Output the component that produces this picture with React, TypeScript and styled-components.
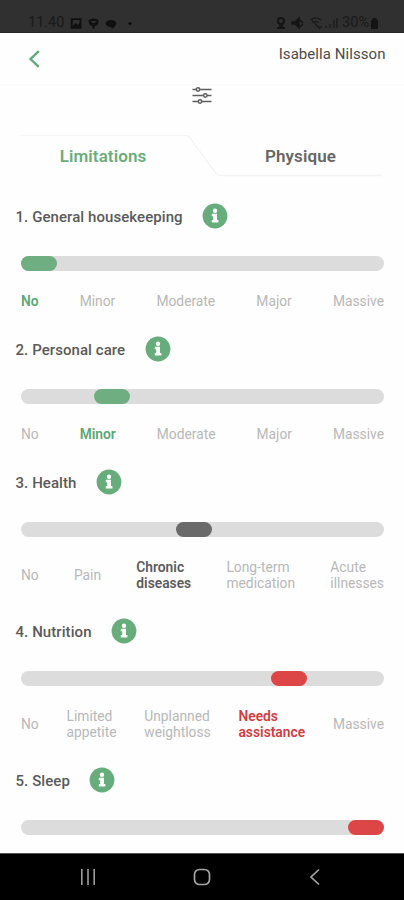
import React from "react";
import styled, { createGlobalStyle } from "styled-components";

const GlobalStyle = createGlobalStyle`
  * { box-sizing: border-box; }
  body {
    margin: 0;
    background: #fefefe;
    font-family: Roboto, "Liberation Sans", sans-serif;
  }
`;

type Tone = "green" | "grey" | "red";

const fills: Record<Tone, string> = { green: "#6fae80", grey: "#6a6a6a", red: "#dc4646" };
const inks: Record<Tone, string> = { green: "#5ba873", grey: "#5c5c5c", red: "#cf3d42" };

const Screen = styled.div`
  display: flex;
  flex-direction: column;
  width: 404px;
  height: 900px;
  overflow: hidden;
  background: #fefefe;
`;

const StatusBar = styled.div`
  display: flex;
  justify-content: space-between;
  flex: none;
  height: 33px;
  padding: 14px 24px 0 28px;
  background: #303030;
  border-bottom: 1px solid #262626;
  color: #191919;
`;

const StatusGroup = styled.div`
  display: flex;
  align-items: center;
  height: 18px;
`;

const StatusText = styled.span`
  font-size: 14.5px;
  line-height: 18px;
`;

const Header = styled.header`
  display: flex;
  justify-content: space-between;
  flex: none;
  height: 52px;
  padding: 0 18.5px 0 28px;
  border-bottom: 1px solid #fafafa;
`;

const BackButton = styled.button`
  display: flex;
  margin: 17px 0 0;
  padding: 0;
  border: 0;
  background: none;
  height: 18px;
`;

const UserName = styled.div`
  padding-top: 11px;
  font-size: 15px;
  line-height: 20px;
  letter-spacing: 0.06px;
  color: #4c4c4c;
`;

const FilterRow = styled.div`
  display: flex;
  justify-content: center;
  flex: none;
  height: 50px;
`;

const TabBar = styled.nav`
  position: relative;
  display: grid;
  grid-template-columns: 165px 162px;
  column-gap: 34px;
  padding-left: 20.5px;
  flex: none;
  height: 43px;
  margin-bottom: 25px;
`;

const TabOutline = styled.svg`
  position: absolute;
  left: 0;
  top: 0;
`;

const Tab = styled.div<{ $active?: boolean }>`
  font-size: 17px;
  font-weight: 600;
  line-height: 43px;
  letter-spacing: 0.1px;
  text-align: center;
  color: ${(p) => (p.$active ? "#69ad7b" : "#666666")};
`;

const Content = styled.main`
  flex: 1;
  min-height: 0;
  overflow: hidden;
  padding-right: 20px;
`;

const Question = styled.section`
  display: flex;
  flex-direction: column;
  padding-bottom: 27.5px;
`;

const Heading = styled.div`
  display: flex;
  align-items: center;
  gap: 19.5px;
  height: 26px;
  padding-left: 15.5px;
`;

const Title = styled.h2`
  margin: 0;
  padding-top: 2px;
  font-size: 15px;
  font-weight: 500;
  line-height: 20px;
  letter-spacing: 0.07px;
  color: #5a5a5a;
`;

const Track = styled.div`
  height: 15px;
  margin: 26.5px 0 22px 21px;
  border-radius: 8px;
  background: #dcdcdc;
`;

const Thumb = styled.div<{ $tone: Tone; $at: number }>`
  width: 36px;
  height: 15px;
  margin-left: ${(p) => p.$at}px;
  border-radius: 8px;
  background: ${(p) => fills[p.$tone]};
`;

const Options = styled.div`
  display: flex;
  align-items: center;
  justify-content: space-between;
  padding-left: 21px;
`;

const Option = styled.span<{ $tone?: Tone }>`
  font-size: 13.8px;
  line-height: 16px;
  letter-spacing: 0;
  white-space: pre-line;
  font-weight: ${(p) => (p.$tone ? 600 : 400)};
  color: ${(p) => (p.$tone ? inks[p.$tone] : "#b8b8b8")};
`;

const NavBar = styled.footer`
  display: flex;
  align-items: center;
  justify-content: space-between;
  flex: none;
  height: 47px;
  padding: 0 82px 0 80px;
  background: #000;
  border-top: 1px solid #555;
`;

const InfoIcon = () => (
  <svg width="26" height="26" viewBox="0 0 26 26">
    <circle cx="13" cy="13" r="12.4" fill="#67ad7b" />
    <circle cx="13" cy="7.700" r="2.200" fill="#fff" />
    <path d="M9.800 10.800h5.200v6.200h1.400v2.500H9.800V17h1.400v-3.700H9.800z" fill="#fff" />
  </svg>
);

interface QuestionData {
  title: string;
  at: number;
  tone: Tone;
  selected: number;
  options: string[];
}

const questions: QuestionData[] = [
  { title: "1. General housekeeping", at: 0, tone: "green", selected: 0, options: ["No", "Minor", "Moderate", "Major", "Massive"] },
  { title: "2. Personal care", at: 72.5, tone: "green", selected: 1, options: ["No", "Minor", "Moderate", "Major", "Massive"] },
  { title: "3. Health", at: 155, tone: "grey", selected: 2, options: ["No", "Pain", "Chronic\ndiseases", "Long-term\nmedication", "Acute\nillnesses"] },
  { title: "4. Nutrition", at: 250, tone: "red", selected: 3, options: ["No", "Limited\nappetite", "Unplanned\nweightloss", "Needs\nassistance", "Massive"] },
  { title: "5. Sleep", at: 327, tone: "red", selected: 4, options: [] },
];

export default function App() {
  return (
    <>
      <GlobalStyle />
      <Screen>
        <StatusBar>
          <StatusGroup>
            <StatusText>11.40</StatusText>
            <svg width="64" height="18" viewBox="0 0 66 18" fill="#101010">
              <path d="M7 4h11v11H7zM9 6v6l3-3 2 2 2-2V6z" fillRule="evenodd" />
              <path d="M25 6.500Q31 2 36 6.500L34.500 11 31.500 12v3h-2v-3L26.500 11zM28 7l1 2h3l1-2z" fillRule="evenodd" />
              <ellipse cx="48.500" cy="9.500" rx="5.500" ry="3.600" />
              <path d="M47 12h6l-3 3z" />
            </svg>
            <svg width="8" height="18" viewBox="0 0 8 18">
              <circle cx="2" cy="9.500" r="1.600" fill="#0c0c0c" />
            </svg>
          </StatusGroup>
          <StatusGroup>
            <svg width="66" height="18" viewBox="0 0 66 18" fill="none" stroke="#151515" strokeWidth="1.500">
              <circle cx="5" cy="7" r="3" strokeWidth="2.200" />
              <path d="M1 14h8M3 12h4" strokeWidth="2.200" />
              <path d="M16 8h3l4-4v10l-4-4h-3zM24 6l3 3M24 13l3-3" fill="#151515" />
              <path d="M34 6Q40 2 45 6M36 9q4-3 7 0M35 5l9 10M42 13h4" stroke="#1d1d1d" />
              <path d="M50 14v-2M54 14v-4M58 14V6M61 14V4" stroke="#1d1d1d" />
            </svg>
            <StatusText>30%</StatusText>
            <svg width="11" height="18" viewBox="0 0 11 18">
              <path d="M3.500 4h4v2h1.500v9H2V6h1.500z" fill="#141414" />
            </svg>
          </StatusGroup>
        </StatusBar>
        <Header>
          <BackButton aria-label="Back">
            <svg width="13" height="18" viewBox="0 0 13 18">
              <path d="M10.800 1.200 2.500 9l8.300 7.800" fill="none" stroke="#5fa978" strokeWidth="2.300" />
            </svg>
          </BackButton>
          <UserName>Isabella Nilsson</UserName>
        </Header>
        <FilterRow>
          <svg width="20" height="20" viewBox="0 0 20 20" fill="none" stroke="#5e5e5e" strokeWidth="1.500">
            <path d="M.5 4.500h4M7.500 4.500h12M.5 10.500h11M15 10.500h4.500M.5 16.500h6M9.500 16.500h10" />
            <circle cx="6" cy="4.500" r="1.700" />
            <circle cx="13.300" cy="10.500" r="1.700" />
            <circle cx="8" cy="16.500" r="1.700" />
          </svg>
        </FilterRow>
        <TabBar>
          <TabOutline width="404" height="43" viewBox="0 0 404 43">
            <path d="M21 0h163Q188 0 191 4.500l25 34q3 2.500 6 2h160" fill="none" stroke="#f3f3f3" strokeWidth="1.300" />
          </TabOutline>
          <Tab $active>Limitations</Tab>
          <Tab>Physique</Tab>
        </TabBar>
        <Content>
          {questions.map((q) => (
            <Question key={q.title}>
              <Heading>
                <Title>{q.title}</Title>
                <InfoIcon />
              </Heading>
              <Track>
                <Thumb $tone={q.tone} $at={q.at} />
              </Track>
              <Options>
                {q.options.map((o, i) => (
                  <Option key={o} $tone={i === q.selected ? q.tone : undefined}>
                    {o}
                  </Option>
                ))}
              </Options>
            </Question>
          ))}
        </Content>
        <NavBar>
          <svg width="16" height="18" viewBox="0 0 16 18">
            <path d="M1.800 1v16M8 1v16M14.200 1v16" stroke="#9b9b9b" strokeWidth="1.600" />
          </svg>
          <svg width="18" height="18" viewBox="0 0 18 18">
            <rect x="1.500" y="1.500" width="15" height="15" rx="5" fill="none" stroke="#a5a5a5" strokeWidth="1.700" />
          </svg>
          <svg width="14" height="18" viewBox="0 0 14 18">
            <path d="M11 1.500 3 9l8 7.500" fill="none" stroke="#a5a5a5" strokeWidth="1.700" />
          </svg>
        </NavBar>
      </Screen>
    </>
  );
}
